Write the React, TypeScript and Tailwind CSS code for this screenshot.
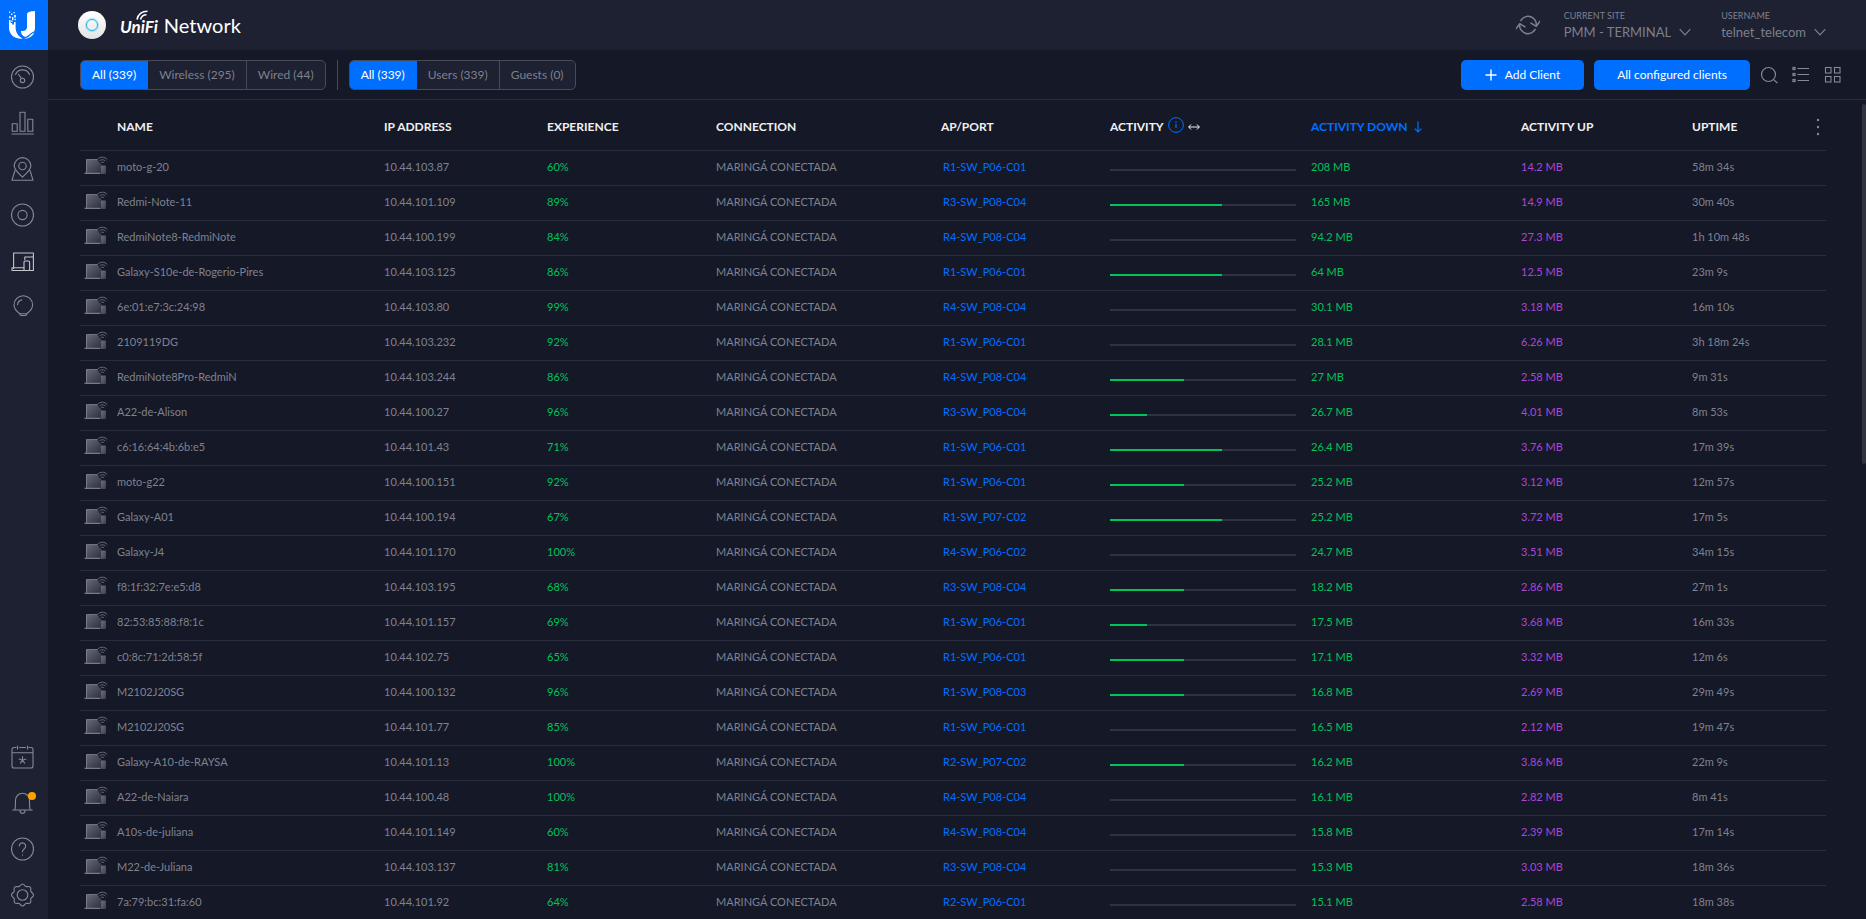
import type { ReactNode } from "react"

type Client = {
  name: string
  ip: string
  experience: string
  port: string
  activity: number
  down: string
  up: string
  uptime: string
}

const clients: Client[] = [
  { name: "moto-g-20", ip: "10.44.103.87", experience: "60%", port: "R1-SW_P06-C01", activity: 0, down: "208 MB", up: "14.2 MB", uptime: "58m 34s" },
  { name: "Redmi-Note-11", ip: "10.44.101.109", experience: "89%", port: "R3-SW_P08-C04", activity: 60, down: "165 MB", up: "14.9 MB", uptime: "30m 40s" },
  { name: "RedmiNote8-RedmiNote", ip: "10.44.100.199", experience: "84%", port: "R4-SW_P08-C04", activity: 0, down: "94.2 MB", up: "27.3 MB", uptime: "1h 10m 48s" },
  { name: "Galaxy-S10e-de-Rogerio-Pires", ip: "10.44.103.125", experience: "86%", port: "R1-SW_P06-C01", activity: 60, down: "64 MB", up: "12.5 MB", uptime: "23m 9s" },
  { name: "6e:01:e7:3c:24:98", ip: "10.44.103.80", experience: "99%", port: "R4-SW_P08-C04", activity: 0, down: "30.1 MB", up: "3.18 MB", uptime: "16m 10s" },
  { name: "2109119DG", ip: "10.44.103.232", experience: "92%", port: "R1-SW_P06-C01", activity: 0, down: "28.1 MB", up: "6.26 MB", uptime: "3h 18m 24s" },
  { name: "RedmiNote8Pro-RedmiN", ip: "10.44.103.244", experience: "86%", port: "R4-SW_P08-C04", activity: 40, down: "27 MB", up: "2.58 MB", uptime: "9m 31s" },
  { name: "A22-de-Alison", ip: "10.44.100.27", experience: "96%", port: "R3-SW_P08-C04", activity: 20, down: "26.7 MB", up: "4.01 MB", uptime: "8m 53s" },
  { name: "c6:16:64:4b:6b:e5", ip: "10.44.101.43", experience: "71%", port: "R1-SW_P06-C01", activity: 60, down: "26.4 MB", up: "3.76 MB", uptime: "17m 39s" },
  { name: "moto-g22", ip: "10.44.100.151", experience: "92%", port: "R1-SW_P06-C01", activity: 40, down: "25.2 MB", up: "3.12 MB", uptime: "12m 57s" },
  { name: "Galaxy-A01", ip: "10.44.100.194", experience: "67%", port: "R1-SW_P07-C02", activity: 60, down: "25.2 MB", up: "3.72 MB", uptime: "17m 5s" },
  { name: "Galaxy-J4", ip: "10.44.101.170", experience: "100%", port: "R4-SW_P06-C02", activity: 0, down: "24.7 MB", up: "3.51 MB", uptime: "34m 15s" },
  { name: "f8:1f:32:7e:e5:d8", ip: "10.44.103.195", experience: "68%", port: "R3-SW_P08-C04", activity: 40, down: "18.2 MB", up: "2.86 MB", uptime: "27m 1s" },
  { name: "82:53:85:88:f8:1c", ip: "10.44.101.157", experience: "69%", port: "R1-SW_P06-C01", activity: 20, down: "17.5 MB", up: "3.68 MB", uptime: "16m 33s" },
  { name: "c0:8c:71:2d:58:5f", ip: "10.44.102.75", experience: "65%", port: "R1-SW_P06-C01", activity: 40, down: "17.1 MB", up: "3.32 MB", uptime: "12m 6s" },
  { name: "M2102J20SG", ip: "10.44.100.132", experience: "96%", port: "R1-SW_P08-C03", activity: 40, down: "16.8 MB", up: "2.69 MB", uptime: "29m 49s" },
  { name: "M2102J20SG", ip: "10.44.101.77", experience: "85%", port: "R1-SW_P06-C01", activity: 0, down: "16.5 MB", up: "2.12 MB", uptime: "19m 47s" },
  { name: "Galaxy-A10-de-RAYSA", ip: "10.44.101.13", experience: "100%", port: "R2-SW_P07-C02", activity: 40, down: "16.2 MB", up: "3.86 MB", uptime: "22m 9s" },
  { name: "A22-de-Naiara", ip: "10.44.100.48", experience: "100%", port: "R4-SW_P08-C04", activity: 0, down: "16.1 MB", up: "2.82 MB", uptime: "8m 41s" },
  { name: "A10s-de-juliana", ip: "10.44.101.149", experience: "60%", port: "R4-SW_P08-C04", activity: 0, down: "15.8 MB", up: "2.39 MB", uptime: "17m 14s" },
  { name: "M22-de-Juliana", ip: "10.44.103.137", experience: "81%", port: "R3-SW_P08-C04", activity: 0, down: "15.3 MB", up: "3.03 MB", uptime: "18m 36s" },
  { name: "7a:79:bc:31:fa:60", ip: "10.44.101.92", experience: "64%", port: "R2-SW_P06-C01", activity: 0, down: "15.1 MB", up: "2.58 MB", uptime: "18m 38s" },
]

function Icon({ children, className = "size-6" }: { children: ReactNode; className?: string }) {
  return (
    <svg
      viewBox="0 0 24 24"
      className={className}
      fill="none"
      stroke="currentColor"
      strokeWidth="1.1"
      strokeLinecap="round"
      strokeLinejoin="round"
      aria-hidden="true"
    >
      {children}
    </svg>
  )
}

const mainNav = [
  {
    label: "Dashboard",
    icon: (
      <Icon>
        <circle cx="11.5" cy="12" r="11" />
        <path d="M4.5 9.5a7.6 7.6 0 0 1 14 0" />
        <path d="M7.4 9.2l3 4.2" />
        <circle cx="11.5" cy="15.4" r="2.2" />
      </Icon>
    ),
  },
  {
    label: "Statistics",
    icon: (
      <Icon>
        <path d="M1 23h21.5" />
        <rect x="1.2" y="12.8" width="5" height="7.4" />
        <rect x="9" y="1.2" width="5" height="19" />
        <rect x="16.8" y="8.2" width="5" height="12" />
      </Icon>
    ),
  },
  {
    label: "Map",
    icon: (
      <Icon>
        <path d="M11.5 20.2C8 16.5 3.200 12.800 3.200 8.900a8.300 8.300 0 0 1 16.600 0c0 3.900-4.800 7.600-8.300 11.300z" />
        <circle cx="11.5" cy="9" r="3.7" />
        <path d="M4 13.5L1 23.200h21l-3-9.700" />
      </Icon>
    ),
  },
  {
    label: "Devices",
    icon: (
      <Icon>
        <circle cx="11.5" cy="12" r="11" />
        <circle cx="11.5" cy="12" r="4.6" />
      </Icon>
    ),
  },
  {
    label: "Clients",
    active: true,
    icon: (
      <Icon>
        <path d="M2.600 19.500V4h19.800v17.500h-3.600" />
        <path d="M13 18.800H1v2.700h12" />
        <path d="M13.800 10.500V8h8.400" />
        <rect x="13" y="12" width="5.600" height="9.500" rx="1" />
      </Icon>
    ),
  },
  {
    label: "Insights",
    icon: (
      <Icon>
        <path d="M8.800 18.700C6 16.700 3 14.200 3 10a9.300 9.300 0 0 1 18.600 0c0 4.200-3 6.700-5.800 8.700z" />
        <path d="M8.800 18.700l1 1.800h5l1-1.800M6.600 9.700a5.400 5.400 0 0 1 4.200-4.800" />
      </Icon>
    ),
  },
]

const bottomNav = [
  {
    label: "Events",
    icon: (
      <Icon>
        <path d="M5 2.500H3a2 2 0 0 0-2 2V21a2 2 0 0 0 2 2h17a2 2 0 0 0 2-2V4.500a2 2 0 0 0-2-2h-2M8.500 2.500h6M1 7.800h21" />
        <path d="M6.500 1v3M16.500 1v3" />
        <path d="M11.500 11.500v3.700M11.500 15.200l-3.400-1.100M11.500 15.200l3.400-1.100M11.500 15.200l-2.100 2.900M11.500 15.200l2.100 2.900" />
      </Icon>
    ),
  },
  {
    label: "Alerts",
    badge: true,
    icon: (
      <Icon>
        <path d="M1.800 19h19.400M3.800 18.800c.7-1.800.7-4 .7-9.600a7 7 0 0 1 14 0c0 5.600 0 7.800.7 9.600" />
        <path d="M9 19.400a2.500 2.900 0 0 0 5 0" />
      </Icon>
    ),
  },
  {
    label: "Help",
    icon: (
      <Icon>
        <circle cx="11.5" cy="12" r="11" />
        <path d="M8.300 9a3.200 3.200 0 1 1 5 2.700c-1.200.9-1.800 1.400-1.800 3.100" />
        <path d="M11.500 17.800v.3" />
      </Icon>
    ),
  },
  {
    label: "Settings",
    icon: (
      <Icon>
        <circle cx="11.5" cy="12" r="5.3" />
        <path d="M11.500 1c1.900 0 2 1.900 3.400 2.500s2.900-.7 4.300.7.100 2.900.7 4.300 2.600 1.500 2.600 3.500-2 2.100-2.600 3.500.7 2.900-.7 4.300-2.900.1-4.300.7-1.500 2.500-3.400 2.500-2-1.900-3.400-2.500-2.900.7-4.300-.7-.1-2.900-.7-4.300S.5 14 .5 12s2-2.100 2.600-3.500-.7-2.900.7-4.300 2.900-.1 4.300-.7S9.600 1 11.500 1z" />
      </Icon>
    ),
  },
]

function NavItem({ label, icon, active, badge }: { label: string; icon: ReactNode; active?: boolean; badge?: boolean }) {
  return (
    <a
      href="#"
      aria-label={label}
      className={`relative flex h-[46px] items-center pl-[11px] ${active ? "text-[#c4c5cb]" : "text-[#868997]"}`}
    >
      {icon}
      {badge && <span className="absolute left-7 top-3 size-2 rounded-full bg-[#ffa200]" />}
    </a>
  )
}

function Sidebar() {
  return (
    <aside className="flex w-12 shrink-0 flex-col bg-[#1e2131]">
      <a href="#" aria-label="Ubiquiti" className="flex h-[50px] shrink-0 items-center justify-center bg-[#006fff]">
        <svg viewBox="0 0 28 30" className="mr-1 h-[30px] w-7 text-white" fill="currentColor" aria-hidden="true">
          <path d="M19 4.500C19 2.500 21.500 1.200 27 1v16.500c0 1.400-.2 2.700-.8 3.900-1.500.3-3 1.300-4.600 2.900-1.200 1.100-2.700 1.900-4.300 2.600-3-1-4.300-2.500-4.300-5.900 4 .6 6-1.500 6-4z" />
          <path d="M26.200 22.500c-1.700 4-5.700 6.400-10.200 6.300 2.300-.6 4.300-1.500 6-3.200 1.500-1.500 2.700-2.700 4.200-3.100z" />
          <path d="M1 10h1.600v3h1.600v1.500H6V12h1.600v5c0 5 1.800 8.600 7.200 11.700C6.500 29.200 1 24.600 1 17.500z" />
          <path d="M1 1.500h1.200v1.200H1zM3 3.500h1.400v1.400H3zM5.500 2h1.200v1.200H5.500zM6.200 5h1.600v2.400H6.200zM1.200 6.200h1.500v2H1.200zM4 7h1.400v3H4zM6.500 8.800h1.300v1.500H6.500zM3.300 10.500h1.200V12H3.300z" />
        </svg>
      </a>
      <nav className="flex flex-1 flex-col pb-px pt-1" aria-label="Main">
        {mainNav.map((item) => (
          <NavItem key={item.label} {...item} />
        ))}
        <div className="flex-1" />
        {bottomNav.map((item) => (
          <NavItem key={item.label} {...item} />
        ))}
      </nav>
    </aside>
  )
}

function HeaderSelect({ id, label, value }: { id: string; label: string; value: string }) {
  return (
    <div className="relative flex flex-col pt-0.5">
      <label htmlFor={id} className="text-[9px] leading-3">
        {label}
      </label>
      <select
        id={id}
        defaultValue={value}
        className="h-5 appearance-none bg-transparent pr-5 text-[13px] leading-5 outline-none [field-sizing:content]"
      >
        <option>{value}</option>
      </select>
      <svg
        viewBox="0 0 12 8"
        className="pointer-events-none absolute bottom-1.5 right-0 h-2 w-3"
        fill="none"
        stroke="currentColor"
        strokeWidth="1.2"
        aria-hidden="true"
      >
        <path d="M.7 1.200L6 6.800l5.300-5.600" />
      </svg>
    </div>
  )
}

function Header() {
  return (
    <header className="flex h-[50px] shrink-0 items-center bg-[#1e2131] pl-[30px] pr-10 text-[#7d808d]">
      <span className="flex size-7 items-center justify-center rounded-full bg-gradient-to-b from-white to-[#e4e4e6]">
        <span className="size-3 rounded-full border border-[#15b4f0] ring-1 ring-[#15b4f0]/30" />
      </span>
      <h1 className="ml-3.5 flex items-baseline gap-1.5 text-white">
        <span className="relative text-[17px] font-bold italic">
          UniFi
          <svg viewBox="0 0 14 10" className="absolute -top-1 left-4 h-2.5 w-3.5" fill="none" stroke="currentColor" strokeWidth="1.6" aria-hidden="true">
            <path d="M1 9.500C2 4.500 6 1.200 11.500 1.200M4.500 9.500c.8-2.800 2.500-4.800 6-4.800" />
          </svg>
        </span>
        <span className="text-[20px]">Network</span>
      </h1>

      <div className="ml-auto flex items-center gap-[30px]">
        <button type="button" aria-label="Refresh" className="-mr-1.5">
          <Icon>
            <path d="M4.900 7.500a8.300 8.300 0 0 1 15.400 5.300M24 8.200l-3.700 5.100-5.300-3.200" strokeWidth="1.5" />
            <path d="M19.100 16.500a8.300 8.300 0 0 1-15.400-5.300M0 15.800l3.700-5.100 5.300 3.200" strokeWidth="1.5" />
          </Icon>
        </button>
        <HeaderSelect id="site" label="CURRENT SITE" value="PMM - TERMINAL" />
        <HeaderSelect id="user" label="USERNAME" value="telnet_telecom" />
      </div>
    </header>
  )
}

function FilterGroup({ label, options }: { label: string; options: string[] }) {
  return (
    <div role="group" aria-label={label} className="flex h-[30px] overflow-hidden rounded-[5px] border border-[#484a58] bg-[#1e2131]">
      {options.map((option, index) => (
        <button
          key={option}
          type="button"
          aria-pressed={index === 0}
          className={
            index === 0
              ? "-my-px -ml-px bg-[#006fff] px-3 text-white"
              : "border-l border-[#484a58] px-[11px] text-[#7d808d] nth-2:border-l-0"
          }
        >
          {option}
        </button>
      ))}
    </div>
  )
}

function Toolbar() {
  return (
    <div className="flex h-[50px] shrink-0 items-center gap-[11px] border-b border-[#2a2d3c] pl-8 pr-6 text-[12px]">
      <FilterGroup label="Connection type" options={["All (339)", "Wireless (295)", "Wired (44)"]} />
      <span className="h-[30px] w-px bg-[#484a58]" />
      <FilterGroup label="Client type" options={["All (339)", "Users (339)", "Guests (0)"]} />

      <div className="ml-auto flex items-center gap-2.5">
        <button type="button" className="flex h-[30px] items-center gap-2 rounded-[5px] bg-[#006fff] px-6 text-white">
          <svg viewBox="0 0 12 12" className="size-3" stroke="currentColor" strokeWidth="1.4" aria-hidden="true">
            <path d="M6 .5v11M.5 6h11" />
          </svg>
          Add Client
        </button>
        <button type="button" className="h-[30px] rounded-[5px] bg-[#006fff] px-[23px] text-white">
          All configured clients
        </button>
        <div className="flex gap-3.5 text-[#868997]">
          <button type="button" aria-label="Search">
            <svg viewBox="0 0 18 18" className="size-[18px]" fill="none" stroke="currentColor" strokeWidth="1.2" aria-hidden="true">
              <circle cx="8.5" cy="8.5" r="7" />
              <path d="M13.600 13.600l3.700 3.400" />
            </svg>
          </button>
          <button type="button" aria-label="List view">
            <svg viewBox="0 0 18 18" className="size-[18px]" fill="none" stroke="currentColor" strokeWidth="1.2" aria-hidden="true">
              <path d="M5.500 2.500H17M5.500 8.500H17M5.500 14.500H17" />
              <rect x="1" y="1.5" width="2" height="2" />
              <rect x="1" y="7.5" width="2" height="2" />
              <rect x="1" y="13.5" width="2" height="2" />
            </svg>
          </button>
          <button type="button" aria-label="Grid view">
            <svg viewBox="0 0 18 18" className="size-[18px]" fill="none" stroke="currentColor" strokeWidth="1.1" aria-hidden="true">
              <rect x="1.5" y="1.5" width="5.5" height="5.5" />
              <rect x="10.5" y="1.5" width="5.5" height="5.5" />
              <rect x="1.5" y="10.5" width="5.5" height="5.5" />
              <rect x="10.5" y="10.5" width="5.5" height="5.5" />
            </svg>
          </button>
        </div>
      </div>
    </div>
  )
}

function DeviceIcon() {
  return (
    <svg viewBox="0 0 24 20" className="ml-1 h-5 w-6" aria-hidden="true">
      <path d="M2 3.500h11.500l1.500 3 2.500 2V17H2z" fill="url(#laptop)" />
      <path d="M2.500 17V3.500h11" fill="none" stroke="#7f8290" strokeWidth=".8" />
      <path d="M0 16.800h16.500v1.200H1z" fill="#777a88" />
      <rect x="17" y="9.5" width="5" height="8.5" rx=".8" fill="url(#phone)" />
      <path d="M13.300 3.600c2.600-3.200 7.400-3.200 10 0M15 5.400c1.800-2.200 4.900-2.200 6.700 0M16.600 7c1-1.200 2.500-1.200 3.500 0" fill="none" stroke="#6a6d7b" />
    </svg>
  )
}

/* Shared by every device icon in the table */
function IconGradients() {
  return (
    <svg className="absolute size-0" aria-hidden="true">
      <defs>
        <linearGradient id="laptop" x1="0" y1="0" x2="1" y2="1">
          <stop offset="0" stopColor="#676a79" />
          <stop offset="1" stopColor="#2d2f40" />
        </linearGradient>
        <linearGradient id="phone" x1="0" y1="0" x2="1" y2="1">
          <stop offset="0" stopColor="#6c6f7e" />
          <stop offset="1" stopColor="#3c3e4f" />
        </linearGradient>
      </defs>
    </svg>
  )
}

function ClientTable() {
  return (
    <table className="w-full table-fixed border-collapse whitespace-nowrap text-left text-[11px] text-[#7f828f]">
      <thead>
        <tr className="h-[50px] border-b border-[#2a2d3c] text-[12px] text-[#f0f0f2] *:pt-1">
          <th className="w-[37px]" aria-label="Device" />
          <th className="w-[267px]">NAME</th>
          <th className="w-[163px]">IP ADDRESS</th>
          <th className="w-[169px]">EXPERIENCE</th>
          <th className="w-[225px]">CONNECTION</th>
          <th className="w-[169px]">AP/PORT</th>
          <th className="w-[201px]">
            <div className="flex items-center gap-1">
              ACTIVITY
              <svg viewBox="0 0 16 16" className="mb-1 size-4 text-[#006fff]" fill="none" stroke="currentColor" aria-hidden="true">
                <circle cx="8" cy="8" r="7.4" />
                <path d="M8 7v4M8 4.500v1.200" strokeWidth="1.2" />
              </svg>
              <svg viewBox="0 0 12 8" className="h-2 w-3" fill="none" stroke="currentColor" aria-hidden="true">
                <path d="M.7 4h10.600M3 1.500L.7 4 3 6.500M9 1.500L11.300 4 9 6.500" />
              </svg>
            </div>
          </th>
          <th className="w-[210px] text-[#006fff]" aria-sort="descending">
            <button type="button" className="flex items-center gap-1.5">
              ACTIVITY DOWN
              <svg viewBox="0 0 8 12" className="h-3 w-2" fill="none" stroke="currentColor" strokeWidth="1.2" aria-hidden="true">
                <path d="M4 .5v10.500M.7 7.700L4 11l3.300-3.300" />
              </svg>
            </button>
          </th>
          <th className="w-[171px]">ACTIVITY UP</th>
          <th className="w-[134px]">
            <div className="flex items-center justify-between">
              UPTIME
              <button type="button" aria-label="Columns" className="text-[#868997]">
                <svg viewBox="0 0 16 18" className="h-[18px] w-4" fill="currentColor" aria-hidden="true">
                  <circle cx="8" cy="2" r="1.2" />
                  <circle cx="8" cy="9" r="1.2" />
                  <circle cx="8" cy="16" r="1.2" />
                </svg>
              </button>
            </div>
          </th>
        </tr>
      </thead>
      <tbody>
        {clients.map((client) => (
          <tr key={client.ip} className="h-[35px] border-b border-[#2a2d3c]">
            <td className="pb-1">
              <DeviceIcon />
            </td>
            <td>{client.name}</td>
            <td>{client.ip}</td>
            <td className="text-[#00c25c]">{client.experience}</td>
            <td>MARINGÁ CONECTADA</td>
            <td>
              <a href="#" className="pl-0.5 text-[#006fff]">
                {client.port}
              </a>
            </td>
            <td className="pr-[15px] pt-1">
              <div className="h-0.5 bg-[#2f3240]">
                <div className="h-full bg-[#00c456]" style={{ width: `${client.activity}%` }} />
              </div>
            </td>
            <td className="text-[#00c25c]">{client.down}</td>
            <td className="text-[#ab47d6]">{client.up}</td>
            <td>{client.uptime}</td>
          </tr>
        ))}
      </tbody>
    </table>
  )
}

export default function App() {
  return (
    <div className="flex h-screen overflow-hidden bg-[#151827] font-[Lato,sans-serif]">
      <IconGradients />
      <Sidebar />
      <div className="flex min-w-0 flex-1 flex-col">
        <Header />
        <Toolbar />
        <main className="relative min-h-0 flex-1 overflow-hidden pl-8 pr-10">
          <ClientTable />
          {/* Scroll thumb */}
          <div className="absolute right-0 top-1 h-[44%] w-1 rounded-full bg-[#31333f]" />
        </main>
      </div>
    </div>
  )
}
